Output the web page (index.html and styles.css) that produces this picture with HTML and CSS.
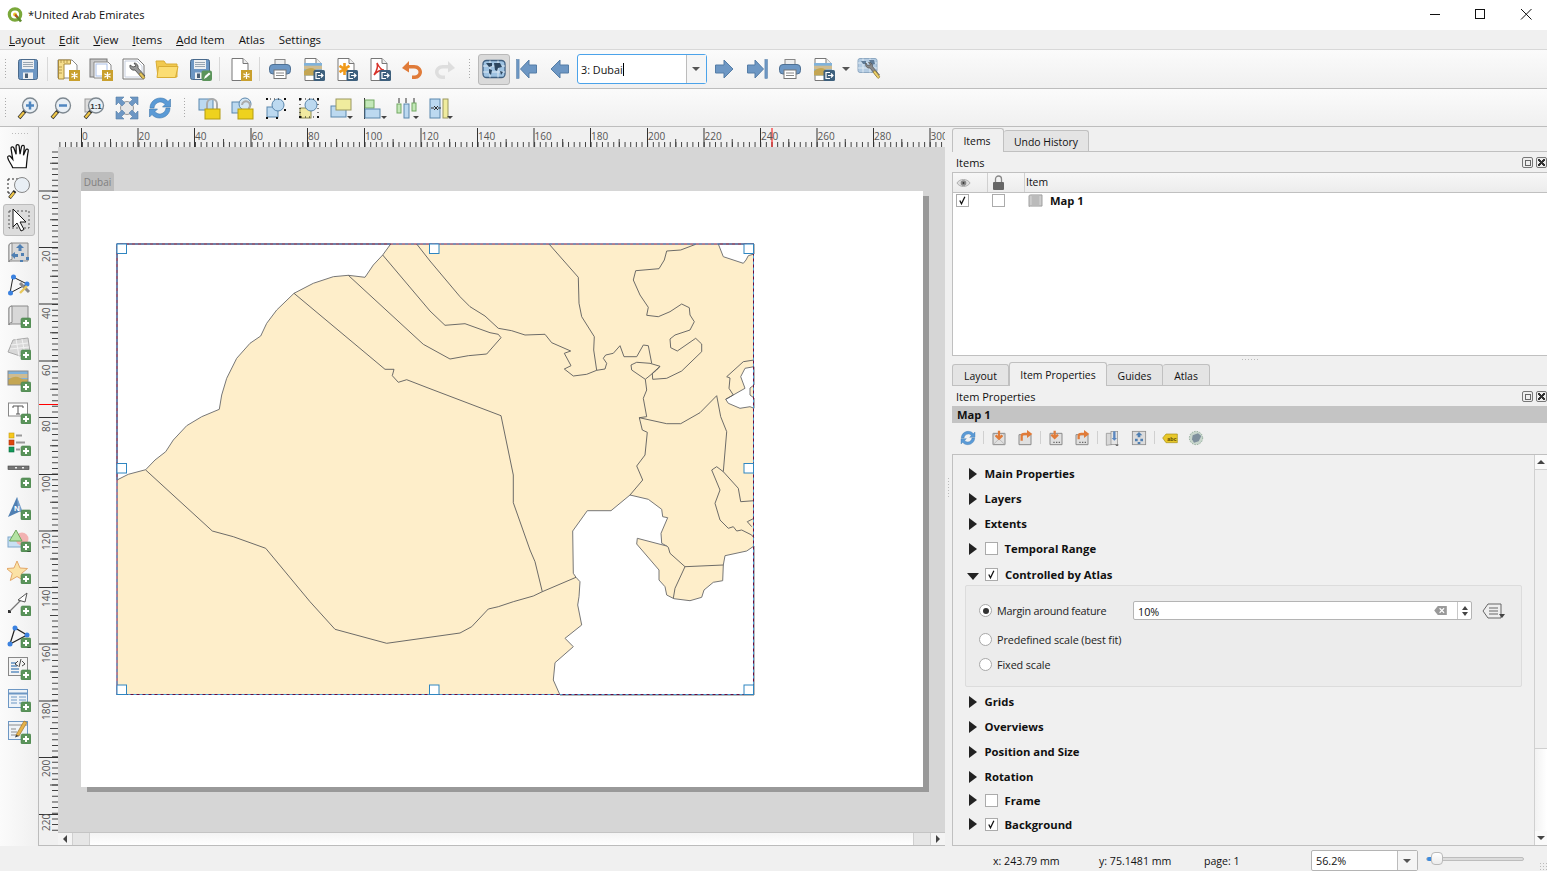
FILE: index.html
```html
<!DOCTYPE html>
<html lang="en">
<head>
<meta charset="utf-8">
<title>*United Arab Emirates</title>
<link rel="stylesheet" href="styles.css">
</head>
<body>
<svg class="defs" xmlns="http://www.w3.org/2000/svg">
  <g id="g-page"><path d="M4 1.500h11l5 5v17H4z" fill="#fff" stroke="#777"/><path d="M15 1.500v5h5" fill="#eee" stroke="#777"/></g>
  <g id="g-bstar"><rect x="13" y="13" width="11" height="11" fill="#c9a02e"/><path d="M18.500 15v7M15.400 16.700l6.200 3.600M21.600 16.700l-6.200 3.600" stroke="#fff" stroke-width="1.200"/></g>
  <g id="g-bexp"><rect x="12.500" y="13" width="11.500" height="11" rx="1.500" fill="#3d5f7c"/><path d="M19 15.500h-4v6h4" fill="none" stroke="#fff" stroke-width="1.200"/><path d="M17 18.500h5M20 16.500l2 2-2 2" fill="none" stroke="#fff" stroke-width="1.200"/></g>
  <g id="g-plus"><rect x="14" y="14" width="10" height="10" rx="1.500" fill="#5b945b" stroke="#48804a" stroke-width=".6"/><path d="M19 16v6M16 19h6" stroke="#fff" stroke-width="2"/></g>
  <g id="g-floppy"><rect x="2.500" y="2.500" width="19" height="20" rx="2" fill="#6d97c4" stroke="#4a6a8c"/><rect x="6" y="3" width="12" height="9" fill="#eef0f2"/><path d="M7 5.500h10M7 7.500h10M7 9.500h10" stroke="#9aa7b3"/><rect x="7" y="15.500" width="10" height="6.500" fill="#eef0f2"/><rect x="9" y="16.500" width="3" height="4.500" fill="#4a5f75"/></g>
  <g id="g-glass"><path d="M9 15l-6 7" stroke="#222" stroke-width="3.600"/><path d="M8 16.200l-4.600 5.300" stroke="#eec64a" stroke-width="2.400"/><circle cx="14" cy="9.500" r="7.500" fill="#e9eff5" stroke="#7e8890" stroke-width="1.300"/></g>
  <g id="g-image"><rect x="0" y="0" width="20" height="14" fill="#7fb2dc"/><path d="M0 3h20v4H0z" fill="#f0c070" opacity=".7"/><path d="M0 9c5-4 9-4 12-2s6 1 8 1v6H0z" fill="#c4a653"/></g>
  <g id="g-scroll"><path d="M5 2h16v18H5c-2.500 0-3 1-3 1V4c0-1 1.500-2 3-2z" fill="#d8d8d8" stroke="#8a8a8a"/><path d="M5 2c-1.700.5-3 1-3 3v16c0-1.500 1-2.500 3-2.500z" fill="#f2f2f2" stroke="#8a8a8a"/></g>
  <g id="g-nodes"><path d="M4.500 22L9.500 6l12 7z" fill="none" stroke="#222" stroke-width="1.200"/><circle cx="4.500" cy="22" r="2.500" fill="#3b82e0"/><circle cx="9.500" cy="6" r="2.500" fill="#3b82e0"/><circle cx="21.500" cy="13" r="2.500" fill="#3b82e0"/></g>

  <symbol id="i-save" viewBox="0 0 24 24"><use href="#g-floppy"/></symbol>
  <symbol id="i-newlay" viewBox="0 0 24 24"><path d="M2 3h14l5 5v13H2z" fill="#fff" stroke="#888"/><path d="M2.500 3h12v4H8v15H2.500z" fill="#f6de8c" stroke="#a8893a"/><path d="M5 3v3M8 3v3M11 3v3M3 10h3M3 13h3M3 16h3" stroke="#a8893a" stroke-width=".8"/><use href="#g-bstar"/></symbol>
  <symbol id="i-dup" viewBox="0 0 24 24"><rect x="1" y="2" width="17" height="18" fill="#c9c9c9" stroke="#777"/><path d="M5 5h14l3 3v13H5z" fill="#fff" stroke="#888"/><rect x="7" y="7" width="11" height="12" fill="none" stroke="#a9bfe8"/><use href="#g-bstar"/></symbol>
  <symbol id="i-mgr" viewBox="0 0 24 24"><path d="M1 2h15l6 6v14H1z" fill="#fff" stroke="#777"/><path d="M3 4h12l5 5v11H3z" fill="none" stroke="#c8cfdf"/><path d="M8 8a4 4 0 0 0 5 5l7 8 3-2-7-8a4 4 0 0 0-4-5l2 3-3 1z" fill="#9a9a9a" stroke="#444" stroke-width=".8"/><path d="M17 17l4 5 2-1.500-4-5z" fill="#e6c65c" stroke="#8b7426" stroke-width=".6"/></symbol>
  <symbol id="i-open" viewBox="0 0 24 24"><path d="M1 4h8l2 3h11v13H3z" fill="#f1c94f" stroke="#d9ad35"/><path d="M3.500 9.500H23l-2.500 11H2z" fill="#fbdd73" stroke="#d9ad35"/></symbol>
  <symbol id="i-saveas" viewBox="0 0 24 24"><use href="#g-floppy"/><rect x="13.500" y="13.500" width="10.500" height="10.500" rx="2" fill="#5b945b"/><path d="M16 22l1-3 4-3.500 1.500 1.500-4 3.500z" fill="#fff"/></symbol>
  <symbol id="i-newtpl" viewBox="0 0 24 24"><use href="#g-page"/><use href="#g-bstar"/></symbol>
  <symbol id="i-print" viewBox="0 0 24 24"><rect x="7" y="2.500" width="10" height="7" fill="#eee" stroke="#888"/><rect x="1.500" y="7.500" width="21" height="9.500" rx="3.500" fill="#6d97c4" stroke="#4f7093"/><rect x="6" y="13" width="12" height="8.500" fill="#fff" stroke="#777"/><path d="M8 16h8M8 18.500h8" stroke="#888"/></symbol>
  <symbol id="i-eimg" viewBox="0 0 24 24"><use href="#g-page"/><use href="#g-image" transform="translate(3 6) scale(.9)"/><use href="#g-bexp"/></symbol>
  <symbol id="i-esvg" viewBox="0 0 24 24"><use href="#g-page"/><path d="M10.500 6v12M5.500 8.800l10 6.400M15.500 8.800l-10 6.400" stroke="#f09a1a" stroke-width="2.600"/><use href="#g-bexp"/></symbol>
  <symbol id="i-epdf" viewBox="0 0 24 24"><use href="#g-page"/><path d="M10 6c1 3 1 6-3 12 3-4 6-5 10-5-3 0-5-3-7-7z" fill="none" stroke="#d8322a" stroke-width="1.500"/><use href="#g-bexp"/></symbol>
  <symbol id="i-undo" viewBox="0 0 24 24"><path d="M2 11l7-7v4h5c5 0 8 3.500 8 7s-3 7-7 7h-3v-3.500h2.500c2.200 0 4-1.500 4-3.500s-2-3.500-4.500-3.500H9v4z" fill="#e07b39"/></symbol>
  <symbol id="i-redo" viewBox="0 0 24 24"><path d="M22 11l-7-7v4h-5c-5 0-8 3.500-8 7s3 7 7 7h3v-3.500H9.500c-2.200 0-4-1.500-4-3.500s2-3.500 4.500-3.500h5v4z" fill="#dedede"/></symbol>
  <symbol id="i-atlas" viewBox="0 0 24 24"><rect x="1" y="3.500" width="22" height="17" rx="3.500" fill="#9fc3e2" stroke="#3f5f80" stroke-width="1.300"/><path d="M8 3.500v17M16 3.500v17M1 9h22M1 15h22" stroke="#dbe8f3"/><path d="M4 6h6v3l-3 1zM12 6h6l2 4-4 1-1 3-2-1zM7 12l3 1-1 5-2-2zM18 14l3 1-2 3z" fill="#2c4660"/></symbol>
  <symbol id="i-first" viewBox="0 0 24 24"><rect x="1.500" y="2.500" width="2.600" height="19" fill="#6d97c4" stroke="#557da6" stroke-width=".5"/><path d="M5.500 12L14 3v5h7.500v8H14v5z" fill="#6d97c4" stroke="#557da6"/></symbol>
  <symbol id="i-prev" viewBox="0 0 24 24"><path d="M3 12l9-9v5h8.500v8H12v5z" fill="#6d97c4" stroke="#557da6"/></symbol>
  <symbol id="i-next" viewBox="0 0 24 24"><path d="M21 12l-9-9v5H3.500v8H12v5z" fill="#6d97c4" stroke="#557da6"/></symbol>
  <symbol id="i-last" viewBox="0 0 24 24"><rect x="19.900" y="2.500" width="2.600" height="19" fill="#6d97c4" stroke="#557da6" stroke-width=".5"/><path d="M18.500 12L10 3v5H2.500v8H10v5z" fill="#6d97c4" stroke="#557da6"/></symbol>
  <symbol id="i-aset" viewBox="0 0 24 24"><rect x="1" y="1.500" width="19" height="14" rx="2" fill="#b3cbe2" stroke="#8fa9c2"/><path d="M6 1.500v14M13 1.500v14M1 6h19M1 11h19" stroke="#dfeaf3"/><path d="M4 4h5v3H6zM12 3h5l1 4-4 1z" fill="#5f7b97"/><path d="M9 6a3.500 3.500 0 0 0 4 5l7 9 2.500-2-7-8.500a3.500 3.500 0 0 0-4-4l2 2.500-3 .5z" fill="#8a8a8a" stroke="#444" stroke-width=".6"/><path d="M16 15l5 6.500 2-1.500-5-6.500z" fill="#eccf6a" stroke="#8b7426" stroke-width=".6"/></symbol>
  <symbol id="i-zin" viewBox="0 0 24 24"><use href="#g-glass"/><path d="M14 5.500v8M10 9.500h8" stroke="#4f86c0" stroke-width="2.500"/></symbol>
  <symbol id="i-zout" viewBox="0 0 24 24"><use href="#g-glass"/><path d="M10 9.500h8" stroke="#4f86c0" stroke-width="2.500"/></symbol>
  <symbol id="i-zfull" viewBox="0 0 24 24"><circle cx="12" cy="12" r="6.500" fill="#e6e6e6" stroke="#999"/><path d="M1 1h8L6.500 3.500 10 7l-3 3-3.500-3.500L1 9zM23 1v8l-2.500-2.500L17 10l-3-3 3.500-3.500L15 1zM1 23v-8l2.500 2.500L7 14l3 3-3.500 3.500L9 23zM23 23h-8l2.500-2.500L14 17l3-3 3.500 3.500L23 15z" fill="#6d97c4" stroke="#557da6" stroke-width=".6"/></symbol>
  <symbol id="i-ref" viewBox="0 0 24 24"><path d="M2 12C2 6 7 2 12.500 2c3.500 0 6 1.500 7.500 3.500L22.500 3v8h-8l2.500-2.500C16 7 14.500 6 12.500 6 9 6 6.500 8.500 6 12z" fill="#5a9ad6" stroke="#4178ad" stroke-width=".6"/><path d="M22 12c0 6-5 10-10.500 10-3.500 0-6-1.500-7.500-3.500L1.500 21v-8h8L7 15.500C8 17 9.500 18 11.500 18c3.500 0 6-2.500 6.500-6z" fill="#5a9ad6" stroke="#4178ad" stroke-width=".6"/></symbol>
  <symbol id="i-lock" viewBox="0 0 24 24"><rect x="1" y="3" width="14" height="11" fill="#bcd9f0" stroke="#5a87ad"/><path d="M9 13V8a5 5 0 0 1 10 0v5" fill="none" stroke="#aaa" stroke-width="2"/><rect x="7" y="13" width="15" height="10" fill="#eed21e" stroke="#b39c12"/></symbol>
  <symbol id="i-unlock" viewBox="0 0 24 24"><rect x="1" y="6" width="13" height="11" fill="#bcd9f0" stroke="#5a87ad"/><circle cx="14" cy="8" r="6" fill="#d5e6f3" stroke="#5a87ad"/><path d="M11 9a4 4 0 1 1 7 3v2" fill="none" stroke="#aaa" stroke-width="2"/><rect x="7" y="13" width="15" height="10" fill="#eed21e" stroke="#b39c12"/></symbol>
  <symbol id="i-selall" viewBox="0 0 24 24"><rect x="3" y="11" width="11" height="10" fill="#bcd9f0" stroke="#5a87ad"/><circle cx="14" cy="9" r="6" fill="#bcd9f0" stroke="#5a87ad"/><path d="M2 2h2v2H2zM20 2h2v2h-2zM2 21h2v2H2zM12 21h2v2h-2zM20 13h2v2h-2z" fill="#111"/><path d="M6 3h12" stroke="#111" stroke-dasharray="1 3"/></symbol>
  <symbol id="i-selinv" viewBox="0 0 24 24"><rect x="3" y="12" width="11" height="10" fill="#f0e9a0" stroke="#8c8a50"/><circle cx="14" cy="9" r="6" fill="#bcd9f0" stroke="#5a87ad"/><path d="M2 2h2v2H2zM20 2h2v2h-2zM2 20h2v2H2zM20 20h2v2h-2z" fill="#111"/><path d="M4 3h16M3 4v16M21 4v16M4 21h16" stroke="#111" stroke-dasharray="1 3"/></symbol>
  <symbol id="i-raise" viewBox="0 0 24 24"><rect x="1" y="10" width="15" height="11" fill="#bcd9f0" stroke="#5a87ad"/><rect x="6" y="3" width="15" height="11" fill="#f0ec9e" stroke="#9a9860"/><path d="M17 20h6l-3 3z" fill="#444"/></symbol>
  <symbol id="i-align" viewBox="0 0 24 24"><path d="M1.500 2v21" stroke="#333"/><rect x="2" y="4" width="9" height="8" fill="#c3e8b8" stroke="#72a862"/><rect x="2" y="13" width="15" height="9" fill="#bcd9f0" stroke="#5a87ad"/><path d="M18 20h6l-3 3z" fill="#444"/></symbol>
  <symbol id="i-dist" viewBox="0 0 24 24"><path d="M3 2v5M10 2v5M18 2v5" stroke="#333"/><rect x="1" y="8" width="4" height="9" fill="#c3e8b8" stroke="#72a862"/><rect x="8" y="8" width="5" height="14" fill="#bcd9f0" stroke="#5a87ad"/><rect x="16" y="7" width="4" height="8" fill="#c3e8b8" stroke="#72a862"/><path d="M17 20h6l-3 3z" fill="#444"/></symbol>
  <symbol id="i-resize" viewBox="0 0 24 24"><rect x="1" y="3" width="10" height="19" fill="#bcd9f0" stroke="#5a87ad"/><rect x="14" y="3" width="5" height="19" fill="#f0ec9e" stroke="#9a9860"/><path d="M2 12h3M9 12h3M5 10l2 2-2 2M9 10l-2 2 2 2" stroke="#333" fill="none"/><path d="M18 20h6l-3 3z" fill="#444"/></symbol>

  <symbol id="i-hand" viewBox="0 0 24 24"><path d="M6 22c-1-3-4-6-4.500-9-.2-1.500 1.500-2 2.500-1l2 2.500L4.500 5c-.3-1.800 2-2.300 2.500-.5L9 10 9 2.800c0-1.800 2.500-1.800 2.700 0L12.500 10l1.300-6.800c.4-1.700 2.700-1.300 2.500.5L15.500 11l2-4.800c.7-1.500 2.800-.8 2.300.9C19 11 18.500 16 18 22z" fill="#fff" stroke="#111" stroke-width="1.100"/></symbol>
  <symbol id="i-zsel" viewBox="0 0 24 24"><path d="M1 3h12M1 3v14M1 17h5" stroke="#222" stroke-dasharray="2 2" fill="none"/><path d="M8 15l-5.500 7" stroke="#222" stroke-width="3.400"/><path d="M7 16.500l-4 5" stroke="#eec64a" stroke-width="2.200"/><circle cx="15" cy="9" r="7.500" fill="#e9eff5" stroke="#888"/></symbol>
  <symbol id="i-sel" viewBox="0 0 24 24"><rect x="2" y="3" width="20" height="17" fill="none" stroke="#555" stroke-dasharray="2 2"/><path d="M6 1l0 18 4-4 4 8 3-1.500-4-7.500h6z" fill="#fff" stroke="#111"/></symbol>
  <symbol id="i-move" viewBox="0 0 24 24"><use href="#g-scroll" transform="translate(0 1)"/><path d="M13 4l4 4h-2.500v3h-3V8H9zM4 15l4-3v2h3v3H8v2zM14 13h3v3h-3zM19 17h3v3h-3zM13 20h3v2h-3z" fill="#4f7fb2"/></symbol>
  <symbol id="i-edit" viewBox="0 0 24 24"><path d="M3 21L6 5l14 7z" fill="none" stroke="#222"/><circle cx="3.500" cy="21" r="2.500" fill="#3b82e0"/><circle cx="6.500" cy="5" r="2.500" fill="#3b82e0"/><circle cx="20" cy="12" r="2.500" fill="#3b82e0"/><path d="M13 11l9 9" stroke="#888" stroke-width="3"/><path d="M13 21l7-7" stroke="#e8c85c" stroke-width="2.400"/></symbol>
  <symbol id="i-amap" viewBox="0 0 24 24"><use href="#g-scroll"/><use href="#g-plus"/></symbol>
  <symbol id="i-a3d" viewBox="0 0 24 24"><path d="M1 16L6 4l15-2 2 14-10 4z" fill="#d8d8d8" stroke="#a9a9a9"/><path d="M4 9l17-2M3 13l19-2M9 3l3 17M15 3l3 15" stroke="#f2f2f2"/><use href="#g-plus"/></symbol>
  <symbol id="i-apic" viewBox="0 0 24 24"><use href="#g-image" transform="translate(1 3)"/><rect x="1" y="3" width="20" height="14" fill="none" stroke="#888"/><use href="#g-plus"/></symbol>
  <symbol id="i-alab" viewBox="0 0 24 24"><rect x="1.500" y="3" width="19" height="13" fill="#fff" stroke="#888"/><path d="M6 6h10v2M11 6v8M9 14h4M6 6v2" stroke="#555" fill="none"/><use href="#g-plus"/></symbol>
  <symbol id="i-aleg" viewBox="0 0 24 24"><rect x="2" y="1" width="5" height="5" fill="#f7c81c" stroke="#c49a12" stroke-width=".6"/><rect x="2" y="8" width="5" height="5" fill="#e0460e" stroke="#a8320a" stroke-width=".6"/><rect x="2" y="15" width="5" height="5" fill="#129a5a" stroke="#0b6a3d" stroke-width=".6"/><path d="M9 3.500h6M9 10.500h9M9 17.500h4" stroke="#999" stroke-width="1.800"/><use href="#g-plus"/></symbol>
  <symbol id="i-asb" viewBox="0 0 24 24"><rect x="1" y="2" width="21" height="3.600" fill="#777" stroke="#444" stroke-width=".6"/><path d="M8 3.800h2M15 3.800h2" stroke="#eee" stroke-width="1.500"/><use href="#g-plus"/></symbol>
  <symbol id="i-ashape" viewBox="0 0 24 24"><rect x="1" y="9" width="14" height="10" fill="#c9e0f3" stroke="#7fa8cb"/><circle cx="15" cy="11" r="6.500" fill="#f2b2b2"/><path d="M2.500 13L9 2l6 11z" fill="#b4e3a3" stroke="#6fa55c"/><use href="#g-plus"/><path d="M20 23.500h4l-2 1.500z" fill="#222"/></symbol>
  <symbol id="i-astar" viewBox="0 0 24 24"><path d="M10 1l3 7 7.500.5-5.800 4.800 2 7.200L10 16.500 3.300 20.500l2-7.200L-.5 8.500 7 8z" fill="#fbe2a5" stroke="#e3a86a"/><use href="#g-plus"/></symbol>
  <symbol id="i-aarrow" viewBox="0 0 24 24"><rect x="1" y="18" width="3" height="3" fill="#333"/><path d="M3 19L16 6" stroke="#777" stroke-width="1.200"/><path d="M20 1l-2 9-7-2z" fill="#fff" stroke="#555"/><use href="#g-plus"/></symbol>
  <symbol id="i-anode" viewBox="0 0 24 24"><use href="#g-nodes" transform="translate(-1.500 -2)"/><use href="#g-plus"/><path d="M20 23.500h4l-2 1.500z" fill="#222"/></symbol>
  <symbol id="i-ahtml" viewBox="0 0 24 24"><rect x="1.500" y="1.500" width="19" height="18" fill="#f4f4f4" stroke="#888"/><path d="M4 7h5M4 10h6M4 13h8M4 16h8" stroke="#5f8fc0" stroke-width="1.400"/><path d="M11 5l-3 3 3 2M15 5l3 3-3 2M14 3l-2 8" stroke="#333" fill="none" stroke-width=".9"/><use href="#g-plus"/></symbol>
  <symbol id="i-atab" viewBox="0 0 24 24"><rect x="1.500" y="1.500" width="19" height="18" fill="#eef3f8" stroke="#6d97c4"/><path d="M1.500 5.500h19" stroke="#6d97c4" stroke-width="2"/><path d="M4 9h6M12 9h7M4 12h6M12 12h7M4 15h6M12 15h4" stroke="#6d97c4"/><use href="#g-plus"/></symbol>
  <symbol id="i-afix" viewBox="0 0 24 24"><rect x="1.500" y="1.500" width="19" height="18" fill="#eef3f8" stroke="#6d97c4"/><path d="M1.500 5h19M4 9h5M4 12h6M4 15h6" stroke="#8a8a8a"/><path d="M9 15L17 1l3 1.500L12 16z" fill="#e6b24a" stroke="#94681e" stroke-width=".6"/><path d="M9 15l-1 2.500 4-1.500z" fill="#333"/><use href="#g-plus"/></symbol>

  <symbol id="p-rf" viewBox="0 0 24 24"><path d="M3 5h18v17H3z" fill="#e0e0e0" stroke="#8a8a8a" stroke-width="1.500"/><path d="M3 22L21 5M3 5l18 17" stroke="#aaa"/><path d="M12 1v11M7 8l5 5 5-5" stroke="#e07b39" stroke-width="3.400" fill="none"/></symbol>
  <symbol id="p-rt" viewBox="0 0 24 24"><path d="M3 7h18v15H3z" fill="#e0e0e0" stroke="#8a8a8a" stroke-width="1.500"/><path d="M7 16V9c0-2 2-3 4-3h6" stroke="#e07b39" stroke-width="3.400" fill="none"/><path d="M15 0l8 6-8 6z" fill="#e07b39"/></symbol>
  <symbol id="p-rf2" viewBox="0 0 24 24"><path d="M3 5h18v17H3z" fill="#e0e0e0" stroke="#8a8a8a" stroke-width="1.500"/><path d="M8 18.500h2M12 18.500h2M16 18.500h2" stroke="#666" stroke-width="2"/><path d="M10 1v10M5 7l5 5 5-5" stroke="#e07b39" stroke-width="3.400" fill="none"/></symbol>
  <symbol id="p-rt2" viewBox="0 0 24 24"><path d="M3 7h18v15H3z" fill="#e0e0e0" stroke="#8a8a8a" stroke-width="1.500"/><path d="M8 18.500h2M12 18.500h2M16 18.500h2" stroke="#666" stroke-width="2"/><path d="M7 14V9c0-2 2-3 4-3h6" stroke="#e07b39" stroke-width="3.400" fill="none"/><path d="M15 0l8 6-8 6z" fill="#e07b39"/></symbol>
  <symbol id="p-mk" viewBox="0 0 24 24"><path d="M2 5h8l3 3h-3v14c-2 0-8 1-8 1z" fill="#d8d8d8" stroke="#8a8a8a"/><rect x="9" y="2" width="10" height="20" fill="#e4e4e4" stroke="#8a8a8a"/><path d="M14 2v10" stroke="#5a87c0" stroke-width="3.500"/><path d="M10 12h8l-4 4z" fill="#5a87c0"/><path d="M15 22h6l-3 2z" fill="#333"/></symbol>
  <symbol id="p-mv" viewBox="0 0 24 24"><rect x="2" y="2" width="20" height="20" fill="#dcdcdc" stroke="#8a8a8a" stroke-width="1.200"/><path d="M12 3l5 5h-3v3h-4V8H7zM6 13h4v4H6zM14 13h4v4h-4zM10 18h4v3h-4z" fill="#4f7fb2"/></symbol>
  <symbol id="p-bk" viewBox="0 0 24 24"><circle cx="12" cy="12" r="10" fill="#c8d6cc" stroke="#6e8f79" stroke-dasharray="2 2"/><path d="M7 8l8-3 5 4-4 8-7 2-3-5z" fill="#7f909d"/></symbol>
  <symbol id="i-chk" viewBox="0 0 13 13"><path d="M3.300 6.500l2 4 4-8.500" fill="none" stroke="#111" stroke-width="1.500"/></symbol>
</svg>

<div class="app">
  <header class="titlebar">
    <svg class="logo" viewBox="0 0 16 16"><circle cx="8" cy="7.500" r="5.700" fill="none" stroke="#7aa83a" stroke-width="3.200"/><circle cx="8" cy="7.500" r="1.900" fill="#e8c62a"/><path d="M8.500 8l5.500 6.500" stroke="#5d8a2a" stroke-width="2.600"/><path d="M8 7.500l2.500 2.800" stroke="#d8322a" stroke-width="1.200"/></svg>
    <span class="title">*United Arab Emirates</span>
    <div class="winctl">
      <svg class="wb" viewBox="0 0 45 30"><path d="M18 14.500h10" stroke="#111"/></svg>
      <svg class="wb" viewBox="0 0 45 30"><rect x="18.500" y="9.500" width="9" height="9" fill="none" stroke="#111"/></svg>
      <svg class="wb" viewBox="0 0 45 30"><path d="M19 9l10.500 10.500M29.500 9L19 19.500" stroke="#111"/></svg>
    </div>
  </header>

  <nav class="menubar">
    <span><u>L</u>ayout</span><span><u>E</u>dit</span><span><u>V</u>iew</span><span><u>I</u>tems</span><span><u>A</u>dd Item</span><span>Atlas</span><span>Settings</span>
  </nav>

  <div class="toolbar tb1">
    <i class="grip"></i>
    <b class="btn"><svg class="ic"><use href="#i-save"/></svg></b>
    <i class="sep"></i>
    <b class="btn"><svg class="ic"><use href="#i-newlay"/></svg></b>
    <b class="btn"><svg class="ic"><use href="#i-dup"/></svg></b>
    <b class="btn"><svg class="ic"><use href="#i-mgr"/></svg></b>
    <b class="btn"><svg class="ic"><use href="#i-open"/></svg></b>
    <b class="btn"><svg class="ic"><use href="#i-saveas"/></svg></b>
    <i class="sep"></i>
    <b class="btn"><svg class="ic"><use href="#i-newtpl"/></svg></b>
    <i class="sep"></i>
    <b class="btn"><svg class="ic"><use href="#i-print"/></svg></b>
    <b class="btn"><svg class="ic"><use href="#i-eimg"/></svg></b>
    <b class="btn"><svg class="ic"><use href="#i-esvg"/></svg></b>
    <b class="btn"><svg class="ic"><use href="#i-epdf"/></svg></b>
    <b class="btn"><svg class="ic"><use href="#i-undo"/></svg></b>
    <b class="btn"><svg class="ic"><use href="#i-redo"/></svg></b>
    <i class="grip mid"></i>
    <b class="btn on"><svg class="ic"><use href="#i-atlas"/></svg></b>
    <b class="btn"><svg class="ic"><use href="#i-first"/></svg></b>
    <b class="btn"><svg class="ic"><use href="#i-prev"/></svg></b>
    <div class="atlas-combo"><span class="atlas-val">3: Dubai</span><span class="drop"></span></div>
    <b class="btn"><svg class="ic"><use href="#i-next"/></svg></b>
    <b class="btn"><svg class="ic"><use href="#i-last"/></svg></b>
    <b class="btn"><svg class="ic"><use href="#i-print"/></svg></b>
    <b class="btn"><svg class="ic"><use href="#i-eimg"/></svg></b>
    <i class="minidrop"></i>
    <b class="btn"><svg class="ic"><use href="#i-aset"/></svg></b>
  </div>

  <div class="toolbar tb2">
    <i class="grip"></i>
    <b class="btn"><svg class="ic"><use href="#i-zin"/></svg></b>
    <b class="btn"><svg class="ic"><use href="#i-zout"/></svg></b>
    <b class="btn"><svg class="ic" viewBox="0 0 24 24"><rect x="3" y="3" width="11" height="13" fill="#ddd" stroke="#999"/><use href="#g-glass"/><text x="14" y="12.500" class="mini-t">1:1</text></svg></b>
    <b class="btn"><svg class="ic"><use href="#i-zfull"/></svg></b>
    <b class="btn"><svg class="ic"><use href="#i-ref"/></svg></b>
    <i class="grip mid"></i>
    <b class="btn"><svg class="ic"><use href="#i-lock"/></svg></b>
    <b class="btn"><svg class="ic"><use href="#i-unlock"/></svg></b>
    <b class="btn"><svg class="ic"><use href="#i-selall"/></svg></b>
    <b class="btn"><svg class="ic"><use href="#i-selinv"/></svg></b>
    <b class="btn"><svg class="ic"><use href="#i-raise"/></svg></b>
    <b class="btn"><svg class="ic"><use href="#i-align"/></svg></b>
    <b class="btn"><svg class="ic"><use href="#i-dist"/></svg></b>
    <b class="btn"><svg class="ic"><use href="#i-resize"/></svg></b>
  </div>

  <main class="main">
    <aside class="lefttools">
      <i class="hgrip"></i>
      <b class="lbtn"><svg class="ic big"><use href="#i-hand"/></svg></b>
      <b class="lbtn"><svg class="ic"><use href="#i-zsel"/></svg></b>
      <b class="lbtn on"><svg class="ic"><use href="#i-sel"/></svg></b>
      <b class="lbtn"><svg class="ic"><use href="#i-move"/></svg></b>
      <b class="lbtn"><svg class="ic"><use href="#i-edit"/></svg></b>
      <b class="lbtn"><svg class="ic"><use href="#i-amap"/></svg></b>
      <b class="lbtn"><svg class="ic"><use href="#i-a3d"/></svg></b>
      <b class="lbtn"><svg class="ic"><use href="#i-apic"/></svg></b>
      <b class="lbtn"><svg class="ic"><use href="#i-alab"/></svg></b>
      <b class="lbtn"><svg class="ic"><use href="#i-aleg"/></svg></b>
      <b class="lbtn"><svg class="ic"><use href="#i-asb"/></svg></b>
      <b class="lbtn"><svg class="ic" viewBox="0 0 24 24"><path d="M1 21L10 1l4 14z" fill="#4f7fb2"/><path d="M10 1l7 18-3-3-3-1z" fill="#7aa2cc"/><text x="7" y="15" class="mini-n">N</text><use href="#g-plus"/></svg></b>
      <b class="lbtn"><svg class="ic"><use href="#i-ashape"/></svg></b>
      <b class="lbtn"><svg class="ic"><use href="#i-astar"/></svg></b>
      <b class="lbtn"><svg class="ic"><use href="#i-aarrow"/></svg></b>
      <b class="lbtn"><svg class="ic"><use href="#i-anode"/></svg></b>
      <b class="lbtn"><svg class="ic"><use href="#i-ahtml"/></svg></b>
      <b class="lbtn"><svg class="ic"><use href="#i-atab"/></svg></b>
      <b class="lbtn"><svg class="ic"><use href="#i-afix"/></svg></b>
    </aside>

    <section class="view">
      <svg class="hruler" viewBox="39 127 906 20">
        <line x1="59.352" y1="144.500" x2="945" y2="144.500" class="tk" stroke-dasharray="1 4.652"/>
        <line x1="110" y1="143" x2="945" y2="143" class="tkm" stroke-dasharray="1 55.520"/>
        <path class="maj" d="M81.500 128v19M138 128v19M194.500 128v19M251 128v19M307.500 128v19M364.500 128v19M421 128v19M477.500 128v19M534 128v19M590.500 128v19M647.500 128v19M704 128v19M760.500 128v19M817 128v19M873.500 128v19M930 128v19"/>
        <path class="red" d="M772 128v19"/>
        <g class="rt">
          <text x="82" y="140">0</text><text x="138.500" y="140">20</text><text x="195" y="140">40</text><text x="251.500" y="140">60</text><text x="308" y="140">80</text><text x="365" y="140">100</text><text x="421.500" y="140">120</text><text x="478" y="140">140</text><text x="534.500" y="140">160</text><text x="591" y="140">180</text><text x="648" y="140">200</text><text x="704.500" y="140">220</text><text x="761" y="140">240</text><text x="817.500" y="140">260</text><text x="874" y="140">280</text><text x="930.500" y="140">300</text>
        </g>
      </svg>
      <div class="viewbody">
        <svg class="vruler" viewBox="39 147 19 685">
          <line x1="55" y1="151.440" x2="55" y2="832" class="tk v" stroke-dasharray="1 4.652"/>
          <line x1="54" y1="162.740" x2="54" y2="832" class="tkm" stroke-dasharray="1 55.520"/>
          <path class="maj" d="M39 191h19M39 247.500h19M39 304h19M39 361h19M39 417.500h19M39 474.500h19M39 531h19M39 587.500h19M39 644h19M39 701h19M39 757.500h19M39 814.500h19"/>
          <path class="red" d="M39 404.500h19"/>
          <g class="rt">
            <text transform="translate(50 200) rotate(-90)">0</text>
            <text transform="translate(50 262) rotate(-90)">20</text>
            <text transform="translate(50 319) rotate(-90)">40</text>
            <text transform="translate(50 376) rotate(-90)">60</text>
            <text transform="translate(50 432) rotate(-90)">80</text>
            <text transform="translate(50 493) rotate(-90)">100</text>
            <text transform="translate(50 550) rotate(-90)">120</text>
            <text transform="translate(50 607) rotate(-90)">140</text>
            <text transform="translate(50 663) rotate(-90)">160</text>
            <text transform="translate(50 720) rotate(-90)">180</text>
            <text transform="translate(50 777) rotate(-90)">200</text>
            <text transform="translate(50 831) rotate(-90)">220</text>
          </g>
        </svg>
        <div class="canvas-col">
          <div class="canvas">
            <div class="pagetab">Dubai</div>
            <div class="page">
              <svg class="map" viewBox="116 243 639 453">
                <rect x="117" y="244" width="637" height="451" fill="#feeeca"/>
                <g class="land">
                  <path class="coast" d="M117 244H390.700L382.700 255 373.300 265 365 277.300 348.300 275.300 333.300 276.700 313.300 283.300 294 293.300 276.700 310 266.700 323.300 260.700 336 250 343.300 236.700 358.300 226.700 378.300 221.700 395 219.300 409.300 201.700 416.700 186.700 425.700 173.300 440 165.700 451.700 155 460 145.700 469.700 128.300 474.300 117 480Z"/>
                  <path class="coast" d="M560 695L553.300 680 555 662.700 573.300 646.700 565 638.300 581.700 625 577.700 605 579 596.700 580 581.700 576 577.300 573.300 573.300 572.700 531 587.300 510.700 611 510.700 630 495 648.300 499.300 661.700 509.300 662.700 516.700 667.700 517.700 661 533.300 661.700 543.300 666.700 546 637.300 538.300 636.700 544 659 570 659 580 665 586.700 666.700 595 674 598.700 690 600.700 701.700 597.300 704 590 713.300 582.300 722.700 580.700 723.300 565 725 555.700 746.700 551 754 546V695Z"/>
                  <path class="coast" d="M718.300 244L723.300 256.700 743.300 263.300 746 260 748.300 255.700 754 254V244Z"/>
                  <path class="coast" d="M754 366.700L745 368.300 740.700 376.700 745 388.300 725.700 399.300 728.300 403.300 740 408.300 750 406.700 754 408.300V398L750 395 750 388 754 385Z"/>
                  <path d="M294 293.300L385 369.300 394 369.300 392.300 375.700 398.300 382.300 406.700 379.700 430 388.700 501 415.700 513.300 475 513.300 502.700 530 550 535 561.700 542.300 591.700"/>
                  <path d="M382.700 255L430 311 445 325.300 465 323.700 490 332.700 498.300 334.300 501 337.700 486.700 354 468.300 355.700 450 359 423.300 344.300 348.300 275.300"/>
                  <path d="M416.700 244L430 261 460 296.700 470 306.700 485 316 498.300 328.300 511.700 330.700 525 335 545 334.300 551.700 342.700 570.700 351 564.300 353.300 571 365.700 564.300 369 573.300 376 586.700 374.300 596.700 370.300 605 369 606.700 363.300 603.300 358.300 605.700 355 613.300 353.300 620 345.700 624 356.700 636.700 356.700 643.300 345 648.300 345.700 651.700 363.300"/>
                  <path d="M549 244L578.300 277.300 579 303.300 581.700 316.700 594.300 336.700 593.700 350 596.700 370.300"/>
                  <path d="M631 365L636.700 362.300 650 363.300 660 366.300 656.700 370 645.300 379.300 631.700 370Z"/>
                  <path d="M645.300 379.300L646.700 390 643.300 398.300 646.700 416.700 639.300 417.700 642.300 430 647.300 432.300 645 455 636.700 466 642.700 480 630 495"/>
                  <path d="M660 366.300L652.300 373.300 652.700 379.300 666.700 378.300 681.700 371 701.700 351.700 701.700 344 695.700 338.300 677.300 351 670.700 347.700 670 339 675 335 690 330 694.300 321.700 690 315 689.300 307.700 681.700 304 670 311.700 658.300 316.700 646.700 315.300 648.300 307.300 640 295 633.300 280 635.700 270.700 659 268.700 664.300 260 666.700 251 680.700 250 695.700 244.300"/>
                  <path d="M639.300 417.700L666.700 423.700 680.700 423.700 700 412.700 716.700 395.700 720.700 416.700 726.700 431.700 723.300 471.700 716.700 466.700 711.700 470 720 490 715 503.300 720 520 728.300 528.300 733.300 526.700 736.700 531 741.700 530 751.700 535 754 538"/>
                  <path d="M723.300 471.700L738.300 488.300 740.700 501.700 754 500.700"/>
                  <path d="M754 518.300L747.300 521.700 751.700 526.700"/>
                  <path d="M754 360L743.300 361.700 726.700 376.700 730 378 729 388.300 733.300 395 725.700 399.300"/>
                  <path d="M666.700 546L668.300 547.300 670 553.300 685 566.700 723.300 565"/>
                  <path d="M685 566.700L675 588.300 673.300 598.300"/>
                  <path d="M576 577.300L542.300 591.700 533.300 596 513.300 601.700 498.300 606.700 488.300 609 471.700 626.700 460 633 386.700 643.300 335 629.300 310 601.700 265.700 548.300 233.300 536.700 212.300 531 145.700 470"/>
                </g>
                <rect x="117" y="244" width="636.500" height="450.500" class="fr1"/>
                <rect x="117" y="244" width="636.500" height="450.500" class="fr2"/>
                <g class="hd">
                  <rect x="117" y="244" width="9.500" height="9.500"/><rect x="429.500" y="244" width="9.500" height="9.500"/><rect x="744" y="244" width="9.500" height="9.500"/>
                  <rect x="117" y="463.500" width="9.500" height="9.500"/><rect x="744" y="463.500" width="9.500" height="9.500"/>
                  <rect x="117" y="685" width="9.500" height="9.500"/><rect x="429.500" y="685" width="9.500" height="9.500"/><rect x="744" y="685" width="9.500" height="9.500"/>
                </g>
              </svg>
            </div>
          </div>
          <div class="hscroll">
            <span class="sb-arrow"><i class="tri-l"></i></span><span class="sb-thumbend"></span><span class="sb-groove"></span><span class="sb-thumbend"></span><span class="sb-arrow"><i class="tri-r"></i></span>
          </div>
        </div>
      </div>
    </section>

    <div class="splitter"><i class="vdots"></i></div>

    <aside class="panels">
      <div class="tabs tabs-top">
        <span class="tab on">Items</span><span class="tab">Undo History</span>
      </div>
      <div class="dock-title"><span>Items</span><span class="dockbtns"><i class="db"></i><i class="db x"></i></span></div>
      <div class="tree">
        <div class="thead">
          <span class="tc1"><svg class="eye" viewBox="0 0 16 10"><path d="M1 5c3-5 11-5 14 0-3 5-11 5-14 0z" fill="#ddd" stroke="#aaa"/><circle cx="8" cy="5" r="3" fill="#888"/><circle cx="8" cy="5" r="1" fill="#333"/></svg></span>
          <span class="tc2"><svg class="lockh" viewBox="0 0 12 15"><path d="M3 7V4a3 3 0 0 1 6 0v3" fill="none" stroke="#888" stroke-width="1.300"/><rect x="0.500" y="7" width="11" height="8" rx="1" fill="#666"/></svg></span>
          <span class="tc3">Item</span>
        </div>
        <div class="trow">
          <span class="cb small"><svg viewBox="0 0 13 13"><use href="#i-chk"/></svg></span>
          <span class="cb small second"></span>
          <svg class="mapic" viewBox="0 0 16 14"><path d="M3 1h12v12H3c-1 0-2 .5-2 .5V2c0-.5 1-1 2-1z" fill="#ccc" stroke="#999"/><path d="M4 1.500h8v11H4z" fill="#bbb"/></svg>
          <strong class="mapname">Map 1</strong>
        </div>
      </div>
      <div class="hsplit"><i class="hdots"></i></div>
      <div class="tabs tabs-bot">
        <span class="tab">Layout</span><span class="tab on">Item Properties</span><span class="tab">Guides</span><span class="tab">Atlas</span>
      </div>
      <div class="dock-title"><span>Item Properties</span><span class="dockbtns"><i class="db"></i><i class="db x"></i></span></div>
      <div class="itembar">Map 1</div>
      <div class="mini-tools">
        <svg class="pi"><use href="#i-ref"/></svg><i class="msep"></i>
        <svg class="pi"><use href="#p-rf"/></svg><svg class="pi"><use href="#p-rt"/></svg><i class="msep"></i>
        <svg class="pi"><use href="#p-rf2"/></svg><svg class="pi"><use href="#p-rt2"/></svg><i class="msep"></i>
        <svg class="pi"><use href="#p-mk"/></svg><svg class="pi"><use href="#p-mv"/></svg><i class="msep"></i>
        <svg class="pi" viewBox="0 0 24 24"><path d="M1 12l5-6h17v13H6z" fill="#e8c82a" stroke="#a88f1a"/><text x="8" y="16" class="mini-abc">abc</text></svg><svg class="pi"><use href="#p-bk"/></svg>
      </div>
      <div class="propbox">
        <div class="props">
          <div class="sec"><i class="tri"></i><b>Main Properties</b></div>
          <div class="sec"><i class="tri"></i><b>Layers</b></div>
          <div class="sec"><i class="tri"></i><b>Extents</b></div>
          <div class="sec"><i class="tri"></i><span class="cb"></span><b class="cbl">Temporal Range</b></div>
          <div class="sec sec-atlas"><i class="tri open"></i><span class="cb"><svg viewBox="0 0 13 13"><use href="#i-chk"/></svg></span><b class="cbl">Controlled by Atlas</b></div>
          <div class="group">
            <div class="rrow"><span class="radio sel"></span><span class="rlab wide">Margin around feature</span>
              <div class="spin"><span class="spin-v">10%</span><svg class="clr" viewBox="0 0 14 10"><path d="M0 5l4-5h10v10H4z" fill="#9a9a9a"/><path d="M6 2.500l5 5M11 2.500l-5 5" stroke="#fff" stroke-width="1.200"/></svg><span class="spin-b"><i class="su"></i><i class="sd"></i></span></div>
              <svg class="ddbtn" viewBox="0 0 24 18"><path d="M1 9l5-7h13v14H6z" fill="#eee" stroke="#666"/><path d="M7 6h9M7 9h9M7 12h9" stroke="#666"/><path d="M17 12h6l-3 4z" fill="#444"/></svg>
            </div>
            <div class="rrow r2"><span class="radio"></span><span class="rlab">Predefined scale (best fit)</span></div>
            <div class="rrow"><span class="radio"></span><span class="rlab">Fixed scale</span></div>
          </div>
          <div class="sec first-after"><i class="tri"></i><b>Grids</b></div>
          <div class="sec"><i class="tri"></i><b>Overviews</b></div>
          <div class="sec"><i class="tri"></i><b>Position and Size</b></div>
          <div class="sec"><i class="tri"></i><b>Rotation</b></div>
          <div class="sec s24 s-frame"><i class="tri"></i><span class="cb"></span><b class="cbl">Frame</b></div>
          <div class="sec s24"><i class="tri"></i><span class="cb"><svg viewBox="0 0 13 13"><use href="#i-chk"/></svg></span><b class="cbl">Background</b></div>
        </div>
        <div class="vscroll"><span class="vs-arrow"><i class="tri-u"></i></span><span class="vs-thumb"></span><span class="vs-groove"></span><span class="vs-arrow"><i class="tri-d"></i></span></div>
      </div>
    </aside>
  </main>

  <footer class="status">
    <span class="st st-x">x: 243.79 mm</span><span class="st st-y">y: 75.1481 mm</span><span class="st st-p">page: 1</span>
    <div class="zoomcombo"><span>56.2%</span><span class="drop"></span></div>
    <div class="slider"><i class="sl-fill"></i><i class="sl-handle"></i></div>
    <i class="sizegrip"></i>
  </footer>
</div>
</body>
</html>
```

FILE: styles.css
```css
* { box-sizing: border-box; }
html, body { margin: 0; padding: 0; }
body { width: 1547px; height: 871px; overflow: hidden; background: #f0f0f0; font: 11.4px "Open Sans", "Noto Sans", sans-serif; color: #111; }
i, b { font-style: normal; display: block; }
.defs { display: block; width: 0; height: 0; }
.app { display: flex; flex-direction: column; width: 1547px; height: 871px; }

.titlebar { height: 30px; background: #fff; display: flex; align-items: center; flex: none; }
.logo { width: 16px; height: 16px; margin-left: 7px; margin-right: 5px; }
.title { font-size: 11.1px; margin-top: -1px; }
.winctl { margin-left: auto; display: flex; }
.wb { width: 45px; height: 30px; display: block; }

.menubar { height: 19px; flex: none; display: flex; gap: 14px; padding-left: 9px; align-items: center; background: #f0f0f0; font-size: 11.45px; }
.toolbar { flex: none; display: flex; align-items: center; background: linear-gradient(#fbfbfb, #f0f0f0); border-top: 1px solid #d8d8d8; }
.tb1 { height: 39px; }
.tb2 { height: 39px; border-top: 1px solid #bdbdbd; border-bottom: 1px solid #bdbdbd; }
.grip { width: 3px; height: 22px; margin: 0 4px 0 4px; background: radial-gradient(circle, #aaa 0.8px, transparent 1px) 0 0 / 3px 3px; }
.grip.mid { margin: 0 7px 0 7px; }
.btn { width: 33px; height: 38px; display: flex; align-items: center; justify-content: center; flex: none; }
.btn.on { width: 32px; height: 31px; background: #dadada; border: 1px solid #b9b9b9; border-radius: 3px; }
.ic { width: 24px; height: 24px; display: block; }
.ic.big { width: 27px; height: 27px; }
.sep { width: 1px; height: 24px; margin: 0 3px; background: #d8d8d8; flex: none; }
.atlas-combo { width: 130px; height: 30px; margin-left: 1px; border: 1px solid #4ba3ea; border-radius: 3px; background: #fff; display: flex; align-items: stretch; flex: none; }
.atlas-val { flex: 1; display: flex; align-items: center; padding-left: 3px; font-size: 10.8px; }
.atlas-val::after { content: ""; width: 1px; height: 13px; background: #000; }
.drop { width: 20px; border-left: 1px solid #bcbcbc; position: relative; background: #f5f5f5; flex: none; }
.drop::after { content: ""; position: absolute; left: 5px; top: 50%; margin-top: -2px; border: 4px solid transparent; border-top: 4px solid #555; border-bottom: 0; }
.minidrop { width: 0; height: 0; margin: 0 2px 0 3px; border: 4px solid transparent; border-top: 4px solid #555; border-bottom: 0; }

.main { flex: 1; display: flex; min-height: 0; }
.lefttools { width: 39px; flex: none; display: flex; flex-direction: column; align-items: center; background: linear-gradient(90deg, #fbfbfb, #f0f0f0); border-right: 1px solid #bcbcbc; height: 719px; }
.hgrip { width: 17px; height: 4px; margin: 5px 0 4px; background: radial-gradient(circle, #bbb 0.8px, transparent 1px) 0 0 / 3px 3px; }
.lbtn { width: 32px; height: 32px; display: flex; align-items: center; justify-content: center; flex: none; }
.lbtn.on { background: #dcdcdc; border: 1px solid #bcbcbc; border-radius: 3px; }

.view { width: 906px; flex: none; display: flex; flex-direction: column; height: 719px; }
.hruler { display: block; width: 906px; height: 20px; flex: none; background: #f0f0f0; }
.viewbody { display: flex; height: 699px; border-bottom: 1px solid #bcbcbc; }
.vruler { display: block; width: 19px; height: 685px; flex: none; background: #f0f0f0; }
.tk { stroke: #444; stroke-width: 5; fill: none; }
.tk.v { stroke-width: 6; }
.tkm { stroke: #444; stroke-width: 8; fill: none; }
.maj { stroke: #333; stroke-width: 1; fill: none; }
.red { stroke: #f00; stroke-width: 1; fill: none; }
.rt { font: 10px "Open Sans", sans-serif; fill: #555; }
.canvas-col { width: 887px; display: flex; flex-direction: column; }
.canvas { height: 685px; flex: none; background: #d6d6d6; padding: 25px 0 0 23px; overflow: hidden; }
.pagetab { width: 33px; height: 19px; background: #bdbdbd; border-radius: 3px 3px 0 0; color: #808080; font-size: 10px; line-height: 20px; text-align: center; }
.page { width: 842px; height: 596px; background: #fff; box-shadow: 6px 5px 0 #999; padding: 52px 0 0 35px; }
.map { display: block; width: 639px; height: 453px; }
.land path { fill: none; stroke: #5c5c5c; stroke-width: .9; stroke-linejoin: round; }
.land path.coast { fill: #fff; stroke: #777; stroke-width: 1; }
.fr1 { fill: none; stroke: #6b0a3f; stroke-width: 1; }
.fr2 { fill: none; stroke: #4a9fd6; stroke-width: 1; stroke-dasharray: 3 3; }
.hd rect { fill: #fff; stroke: #2f86c1; stroke-width: 1; }
.hscroll { height: 13px; display: flex; background: linear-gradient(#f4f4f4, #fff); border-top: 1px solid #c4c4c4; }
.sb-arrow { width: 14px; background: #f4f4f4; display: flex; align-items: center; justify-content: center; flex: none; }
.sb-thumbend { width: 18px; background: #e6e6e6; border-left: 1px solid #d0d0d0; border-right: 1px solid #d0d0d0; flex: none; }
.sb-groove { flex: 1; }
.tri-l { border: 4px solid transparent; border-right: 4px solid #444; border-left: 0; }
.tri-r { border: 4px solid transparent; border-left: 4px solid #444; border-right: 0; }

.splitter { width: 7px; flex: none; display: flex; align-items: center; justify-content: center; }
.vdots { width: 3px; height: 20px; background: radial-gradient(circle, #bbb 0.7px, transparent 1px) 0 0 / 3px 3px; }

.panels { width: 595px; flex: none; display: flex; flex-direction: column; height: 719px; }
.tabs { display: flex; align-items: flex-end; border-bottom: 1px solid #c0c0c0; flex: none; }
.tabs-top { height: 25px; }
.tabs-bot { height: 24px; }
.tab { height: 21px; padding: 1px 0 0; white-space: nowrap; background: #e4e4e4; border: 1px solid #c0c0c0; border-bottom: 0; border-left-width: 0; border-radius: 3px 3px 0 0; display: flex; align-items: center; justify-content: center; font-size: 10.45px; flex: none; }
.tab:first-child { border-left-width: 1px; }
.tab.on { background: #f0f0f0; border-left-width: 1px; margin-bottom: -1px; height: 24px; padding-top: 0; }
.tabs-top .tab:nth-child(1) { width: 52px; padding-right: 2px; }
.tabs-top .tab:nth-child(2) { width: 85px; }
.tabs-bot .tab:nth-child(1) { width: 57px; }
.tabs-bot .tab:nth-child(2) { width: 98px; }
.tabs-bot .tab:nth-child(3) { width: 56px; }
.tabs-bot .tab:nth-child(4) { width: 47px; }
.dock-title { height: 20px; display: flex; align-items: center; justify-content: space-between; padding-left: 4px; flex: none; font-size: 11px; }
.dockbtns { display: flex; gap: 3px; padding-right: 0; }
.db { width: 11px; height: 11px; border: 1px solid #777; border-radius: 2px; background: #eee; position: relative; }
.db::after { content: ""; position: absolute; left: 2px; top: 2px; width: 4px; height: 4px; border: 1px solid #666; }
.db.x::after { border: 0; left: 1px; top: 1px; width: 7px; height: 7px; background: linear-gradient(45deg, transparent 42%, #333 42%, #333 58%, transparent 58%), linear-gradient(-45deg, transparent 42%, #333 42%, #333 58%, transparent 58%); }
.tree { height: 184px; flex: none; background: #fff; border: 1px solid #c0c0c0; border-right: 0; }
.thead { height: 20px; display: flex; background: linear-gradient(#f7f7f7, #ececec); border-bottom: 1px solid #c0c0c0; }
.tc1, .tc2, .tc3 { display: flex; align-items: center; border-right: 1px solid #d0d0d0; }
.tc1 { width: 35px; padding-left: 3px; }
.tc2 { width: 37px; padding-left: 4px; }
.tc3 { flex: 1; padding: 0 0 1px 1px; border-right: 0; font-size: 10.4px; }
.eye { width: 15px; height: 10px; }
.lockh { width: 13px; height: 15px; }
.trow { display: flex; align-items: center; height: 17px; padding-left: 3px; margin-top: -1px; }
.cb { width: 13px; height: 13px; background: #fff; border: 1px solid #ababab; display: block; flex: none; }
.cb svg { display: block; width: 11px; height: 11px; }
.cb.second { margin-left: 23px; }
.mapic { width: 15px; height: 13px; margin: 0 6px 0 23px; }
.mapname { font-weight: 700; font-size: 11.2px; margin-left: 1px; }
.hsplit { height: 6px; flex: none; display: flex; justify-content: center; align-items: center; }
.hdots { width: 18px; height: 3px; background: radial-gradient(circle, #bbb 0.7px, transparent 1px) 0 0 / 3px 3px; }
.itembar { height: 17px; flex: none; background: #c4c4c4; font-weight: 700; font-size: 11.2px; padding-left: 5px; line-height: 17px; }
.mini-tools { height: 31px; flex: none; display: flex; align-items: center; padding: 0 0 2px 8px; }
.pi { width: 16px; height: 16px; display: block; margin-right: 10px; flex: none; }
.msep { width: 1px; height: 13px; background: #d0d0d0; margin: 0 7px 0 -3px; flex: none; }
.propbox { flex: 1; min-height: 0; display: flex; border: 1px solid #c0c0c0; border-width: 1px 0 1px 1px; }
.props { width: 581px; padding: 6px 0 0 12px; flex: none; overflow: hidden; }
.sec { height: 25px; display: flex; align-items: center; padding-left: 3px; }
.sec b { font-weight: 700; font-size: 11.3px; margin-left: 8px; }
.sec .cbl { margin-left: 7px; }
.sec .cb { margin-left: 8px; }
.sec-atlas { margin-top: 1px; }
.s24 { height: 24px; }
.s-frame { margin-top: -1px; }
.first-after { margin-top: 2px; }
.tri { width: 0; height: 0; flex: none; border: 6px solid transparent; border-left: 8px solid #222; border-right: 0; margin-left: 0.500px; }
.tri.open { border: 6px solid transparent; border-top: 7px solid #222; border-bottom: 0; margin-left: -1.500px; margin-right: -1.500px; margin-top: 3px; }
.group { width: 557px; height: 102px; margin-top: -2px; background: #ececec; border: 1px solid #dcdcdc; border-radius: 2px; padding: 12px 0 0 13px; }
.rrow { height: 25px; display: flex; align-items: center; }
.r2 { margin-top: 4px; }
.radio { width: 13px; height: 13px; border-radius: 50%; background: #fff; border: 1px solid #a8a8a8; flex: none; position: relative; }
.radio.sel::after { content: ""; position: absolute; left: 2.500px; top: 2.500px; width: 6px; height: 6px; border-radius: 50%; background: #333; }
.rlab { margin-left: 5px; font-size: 10.8px; letter-spacing: -.1px; color: #222; }
.rlab.wide { width: 136px; flex: none; letter-spacing: -.24px; }
.spin { width: 339px; height: 19px; background: #fff; border: 1px solid #b4b4b4; border-radius: 2px; display: flex; align-items: center; flex: none; }
.spin-v { flex: 1; padding: 1px 0 0 4px; font-size: 10.8px; }
.clr { width: 13px; height: 9px; margin-right: 10px; }
.spin-b { width: 14px; height: 17px; border-left: 1px solid #c8c8c8; display: flex; flex-direction: column; align-items: center; justify-content: center; gap: 2px; }
.su { border: 3.500px solid transparent; border-bottom: 4px solid #444; border-top: 0; }
.sd { border: 3.500px solid transparent; border-top: 4px solid #444; border-bottom: 0; }
.ddbtn { width: 24px; height: 18px; margin-left: 10px; }
.vscroll { width: 13px; flex: none; display: flex; flex-direction: column; border-left: 1px solid #d0d0d0; }
.vs-arrow { height: 14px; flex: none; background: #fafafa; display: flex; align-items: center; justify-content: center; }
.vs-thumb { height: 280px; flex: none; background: #f0f0f0; border-bottom: 1px solid #d0d0d0; border-top: 1px solid #d0d0d0; }
.vs-groove { flex: 1; background: linear-gradient(90deg, #f2f2f2, #fff); }
.tri-u { border: 4px solid transparent; border-bottom: 4px solid #444; border-top: 0; }
.tri-d { border: 4px solid transparent; border-top: 4px solid #444; border-bottom: 0; }

.status { height: 25px; flex: none; display: flex; align-items: flex-start; padding-left: 993px; background: #f0f0f0; position: relative; }
.st { font-size: 10.6px; line-height: 30px; flex: none; }
.st-x { width: 106px; }
.st-y { width: 105px; }
.st-p { width: 107px; }
.zoomcombo { width: 107px; height: 21px; margin-top: 4px; border: 1px solid #b4b4b4; border-radius: 2px; background: #fff; display: flex; padding-left: 4px; align-items: center; font-size: 10.8px; flex: none; }
.zoomcombo span:first-child { flex: 1; }
.zoomcombo .drop { height: 19px; }
.slider { width: 98px; height: 4px; margin: 11px 0 0 8px; background: #dcdcdc; border: 1px solid #bdbdbd; border-radius: 2px; position: relative; flex: none; }
.sl-fill { position: absolute; left: 0; top: -1px; width: 6px; height: 4px; background: #3b8be0; border-radius: 2px; }
.sl-handle { position: absolute; left: 4px; top: -6px; width: 12px; height: 13px; background: linear-gradient(#fff, #ececec); border: 1px solid #b9b9b9; border-radius: 4px; }
.sizegrip { position: absolute; right: 0; bottom: 0; width: 8px; height: 9px; background: radial-gradient(circle, #bbb 0.7px, transparent 1px) 0 0 / 3px 3px; }
.mini-t { font: 700 8px "Liberation Sans", sans-serif; fill: #333; text-anchor: middle; }
.mini-n { font: 700 8px "Liberation Sans", sans-serif; fill: #fff; }
.mini-abc { font: 700 8px "Liberation Sans", sans-serif; fill: #5a4a00; }
```
